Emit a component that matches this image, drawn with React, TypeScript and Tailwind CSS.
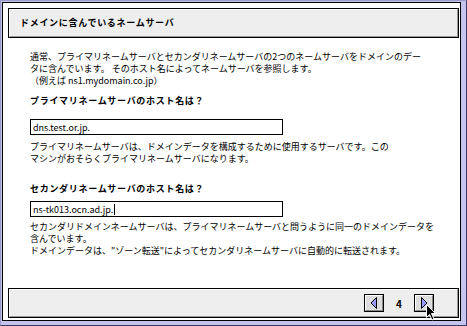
import React from "react";

const jp = { fontFamily: '"Noto Sans CJK JP", "Noto Sans", sans-serif' };

const Bevel: React.FC<{ className?: string; children?: React.ReactNode }> = ({
  className,
  children,
}) => (
  <div className={"border border-black bg-[#eeeeee] " + (className ?? "")}>
    <div className="flex h-full items-center border-t border-l border-t-white border-l-white border-r border-b border-r-[#9a9a9a] border-b-[#9a9a9a]">
      {children}
    </div>
  </div>
);

const ArrowButton: React.FC<{ dir: "left" | "right" }> = ({ dir }) => (
  <div className="h-[18px] w-[20px] border border-black bg-[#dddddd]">
    <div className="flex h-full items-center justify-center border-t border-l border-t-white border-l-white border-r border-b border-r-[#888888] border-b-[#888888]">
      <svg width="8" height="12" viewBox="0 0 8 12">
        {dir === "left" ? (
          <polygon points="6.5,0.5 1,6 6.5,11.5" fill="#9a9aff" stroke="#000" strokeWidth="1" />
        ) : (
          <polygon points="1.5,0.5 7,6 1.5,11.5" fill="#9a9aff" stroke="#000" strokeWidth="1" />
        )}
      </svg>
    </div>
  </div>
);

const Field: React.FC<{ value: string; caret?: boolean }> = ({ value, caret }) => (
  <div className="flex h-[16px] w-[253px] items-center border border-black bg-white pl-[2px] text-[9px] leading-none text-black">
    <span>{value}</span>
    {caret && <span className="ml-[1px] inline-block h-[11px] w-px bg-black" />}
  </div>
);

export default function App() {
  return (
    <div
      className="relative h-[326px] w-[467px] border-l border-t border-[#9a9ac8] border-r border-b border-r-[#3c3c6c] border-b-[#3c3c6c] bg-[#c4c4ec] pl-px pt-px pr-[5px] pb-[4px]"
      style={jp}
    >
      <div className="flex h-full flex-col border border-black bg-white pt-[5px] pl-[5px] pr-px pb-[2px] text-black">
        <Bevel className="h-[30px]">
          <span className="pl-[10px] text-[9px] font-bold tracking-[0.7px]">
            ドメインに含んでいるネームサーバ
          </span>
        </Bevel>

        <div className="pl-[22px] text-[9px] leading-[12px] whitespace-nowrap">
          <div className="mt-[13px]">
            <div>通常、プライマリネームサーバとセカンダリネームサーバの2つのネームサーバをドメインのデー</div>
            <div>タに含んでいます。 そのホスト名によってネームサーバを参照します。</div>
            <div>（例えば ns1.mydomain.co.jp）</div>
          </div>

          <div className="mt-[8px] font-bold tracking-[0.7px]">
            プライマリネームサーバのホスト名は？
          </div>
          <div className="mt-[12px]">
            <Field value="dns.test.or.jp." />
          </div>
          <div className="mt-[6px]">
            <div>プライマリネームサーバは、ドメインデータを構成するために使用するサーバです。この</div>
            <div>マシンがおそらくプライマリネームサーバになります。</div>
          </div>

          <div className="mt-[18px] font-bold tracking-[0.7px]">
            セカンダリネームサーバのホスト名は？
          </div>
          <div className="mt-[6px]">
            <Field value="ns-tk013.ocn.ad.jp." caret />
          </div>
          <div className="mt-[4px]">
            <div>セカンダリドメインネームサーバは、プライマリネームサーバと問うように同一のドメインデータを</div>
            <div>含んでいます。</div>
            <div>ドメインデータは、"ゾーン転送"によってセカンダリネームサーバに自動的に転送されます。</div>
          </div>
        </div>

        <Bevel className="mt-auto h-[30px]">
          <div className="ml-auto flex items-center pr-[23px]">
            <ArrowButton dir="left" />
            <span className="w-[30px] text-center text-[10px] font-bold">4</span>
            <ArrowButton dir="right" />
          </div>
        </Bevel>
      </div>

      <svg
        className="absolute left-[424px] top-[302px]"
        width="12"
        height="19"
        viewBox="0 0 12 19"
      >
        <path
          d="M1.5,1.5 L1.5,14.5 L4.5,11.5 L7,17 L9,16 L6.5,10.5 L10.5,10.5 Z"
          fill="#000"
          stroke="#fff"
          strokeWidth="1"
        />
      </svg>
    </div>
  );
}
